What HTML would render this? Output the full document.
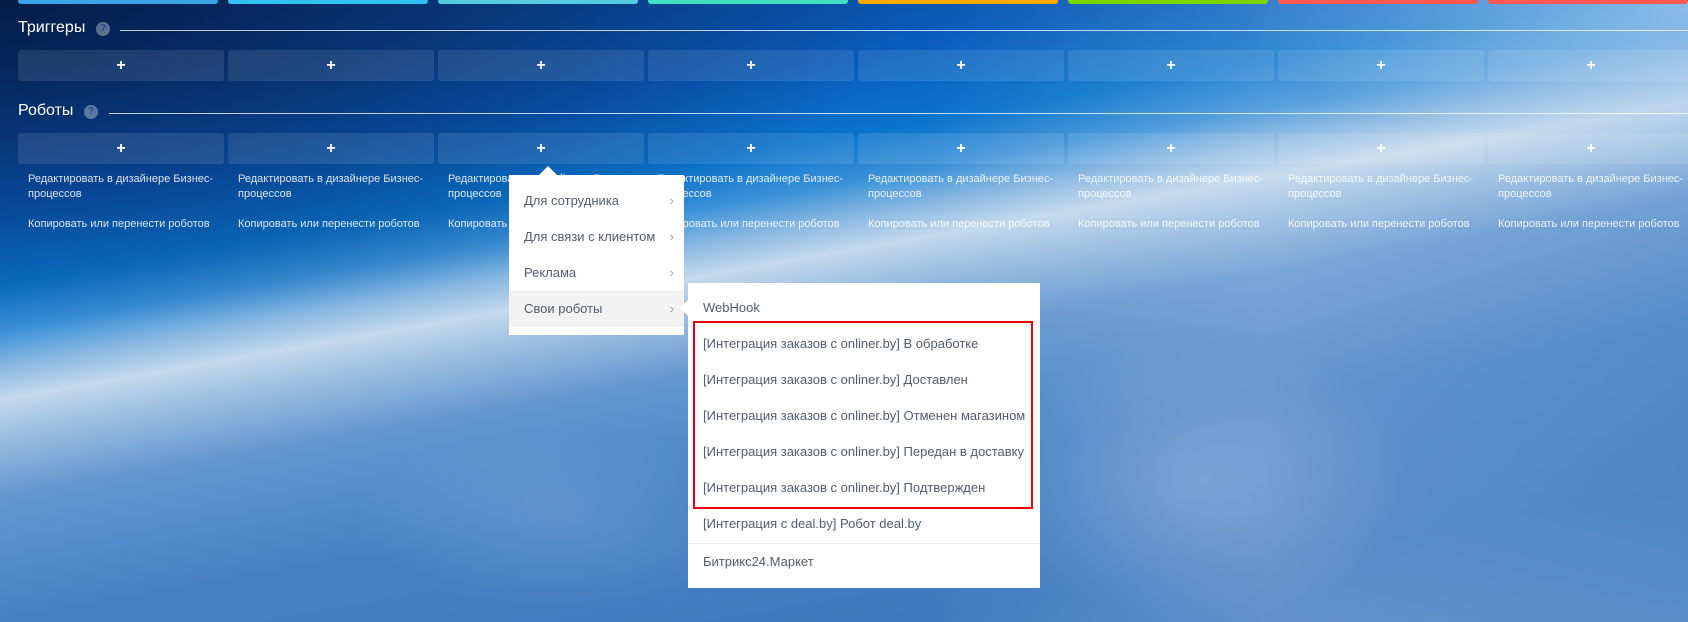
<!DOCTYPE html>
<html><head><meta charset="utf-8"><style>
*{margin:0;padding:0;box-sizing:border-box}
html,body{width:1688px;height:622px;overflow:hidden}
body{position:relative;font-family:"Liberation Sans",Arial,sans-serif;background:#3d78be}
.bg{position:absolute;left:0;top:0;width:1688px;height:622px;
background:
radial-gradient(ellipse 900px 330px at 0 0,rgba(4,18,55,.75),rgba(4,18,55,0) 100%),
radial-gradient(ellipse 450px 170px at 1688px 0,rgba(170,205,238,.75),rgba(170,205,238,0) 100%),
linear-gradient(90deg,rgba(255,255,255,0) 0%,rgba(255,255,255,0) 55%,rgba(225,235,248,.18) 75%,rgba(225,235,248,.1) 100%),
radial-gradient(ellipse 260px 180px at 1200px 480px,rgba(235,242,250,.22),rgba(255,255,255,0) 80%),
radial-gradient(ellipse 260px 110px at 560px 520px,rgba(235,242,250,.15),rgba(255,255,255,0) 80%),
linear-gradient(170deg,#0a3a80 0%,#0a5cbc 22%,#0a74cc 31%,#3a90d8 36%,#8ab8e2 40%,#c4d9ec 43.5%,#a0c2e2 47%,#6497d0 54%,#4580c4 68%,#3f7ac0 85%,#4a82c2 100%);}
.bar{position:absolute;top:0;height:4px;width:200px;border-radius:0 0 3px 3px}
.h{position:absolute;left:18px;color:#fff;font-size:16px}
.q{position:absolute;width:14px;height:14px;border-radius:50%;background:rgba(255,255,255,.35);color:#1d4f8a;font-size:10px;font-weight:bold;text-align:center;line-height:14px}
.line{position:absolute;height:1px;background:rgba(255,255,255,.75);right:0}
.box{position:absolute;width:206px;height:31px;border-radius:3px;background:rgba(255,255,255,.1);color:#fff;text-align:center;font-size:16px;font-weight:bold;line-height:31px}
.t{position:absolute;width:190px;color:rgba(255,255,255,.85);font-size:11px;line-height:15px}
.m{position:absolute;background:#fff}
.mi{position:absolute;left:0;right:0;height:36px;line-height:36px;padding-left:15px;font-size:13px;color:#535c69}
.chev{position:absolute;right:10px;top:0;color:#a0a6ad;font-size:13px}
</style></head><body>
<div class="bg"></div>
<div class="bar" style="left:18px;background:#3ba5e8"></div>
<div class="bar" style="left:228px;background:#2fc2f2"></div>
<div class="bar" style="left:438px;background:#55cbe0"></div>
<div class="bar" style="left:648px;background:#3fdfc0"></div>
<div class="bar" style="left:858px;background:#ffa800"></div>
<div class="bar" style="left:1068px;background:#7bd500"></div>
<div class="bar" style="left:1278px;background:#ff5752"></div>
<div class="bar" style="left:1488px;background:#ff5752"></div>

<div class="h" style="top:19px">Триггеры</div>
<div class="q" style="left:96px;top:22px">?</div>
<div class="line" style="left:120px;top:30px"></div>
<div class="h" style="top:102px">Роботы</div>
<div class="q" style="left:84px;top:105px">?</div>
<div class="line" style="left:109px;top:113px"></div>

<div class="box" style="left:18px;top:50px">+</div><div class="box" style="left:228px;top:50px">+</div><div class="box" style="left:438px;top:50px">+</div><div class="box" style="left:648px;top:50px">+</div><div class="box" style="left:858px;top:50px">+</div><div class="box" style="left:1068px;top:50px">+</div><div class="box" style="left:1278px;top:50px">+</div><div class="box" style="left:1488px;top:50px">+</div>
<div class="box" style="left:18px;top:133px">+</div><div class="box" style="left:228px;top:133px">+</div><div class="box" style="left:438px;top:133px">+</div><div class="box" style="left:648px;top:133px">+</div><div class="box" style="left:858px;top:133px">+</div><div class="box" style="left:1068px;top:133px">+</div><div class="box" style="left:1278px;top:133px">+</div><div class="box" style="left:1488px;top:133px">+</div>

<div class="t" style="left:28px;top:172px">Редактировать в дизайнере Бизнес-процессов<br><br>Копировать или перенести роботов</div>
<div class="t" style="left:238px;top:172px">Редактировать в дизайнере Бизнес-процессов<br><br>Копировать или перенести роботов</div>
<div class="t" style="left:448px;top:172px">Редактировать в дизайнере Бизнес-процессов<br><br>Копировать или перенести роботов</div>
<div class="t" style="left:658px;top:172px">Редактировать в дизайнере Бизнес-процессов<br><br>Копировать или перенести роботов</div>
<div class="t" style="left:868px;top:172px">Редактировать в дизайнере Бизнес-процессов<br><br>Копировать или перенести роботов</div>
<div class="t" style="left:1078px;top:172px">Редактировать в дизайнере Бизнес-процессов<br><br>Копировать или перенести роботов</div>
<div class="t" style="left:1288px;top:172px">Редактировать в дизайнере Бизнес-процессов<br><br>Копировать или перенести роботов</div>
<div class="t" style="left:1498px;top:172px">Редактировать в дизайнере Бизнес-процессов<br><br>Копировать или перенести роботов</div>

<div class="m" style="left:509px;top:175px;width:175px;height:160px">
<div style="position:absolute;left:30px;top:-9px;width:0;height:0;border-left:9px solid transparent;border-right:9px solid transparent;border-bottom:9px solid #fff"></div>
<div class="mi" style="top:8px">Для сотрудника<span class="chev">›</span></div>
<div class="mi" style="top:44px">Для связи с клиентом<span class="chev">›</span></div>
<div class="mi" style="top:80px">Реклама<span class="chev">›</span></div>
<div class="mi" style="top:116px;background:#f2f2f2">Свои роботы<span class="chev">›</span></div>
</div>

<div class="m" style="left:688px;top:283px;width:352px;height:305px">
<div style="position:absolute;left:-8px;top:17px;width:0;height:0;border-top:8px solid transparent;border-bottom:8px solid transparent;border-right:8px solid #fff"></div>
<div class="mi" style="top:7px">WebHook</div>
<div class="mi" style="top:43px">[Интеграция заказов с onliner.by] В обработке</div>
<div class="mi" style="top:79px">[Интеграция заказов с onliner.by] Доставлен</div>
<div class="mi" style="top:115px">[Интеграция заказов с onliner.by] Отменен магазином</div>
<div class="mi" style="top:151px">[Интеграция заказов с onliner.by] Передан в доставку</div>
<div class="mi" style="top:187px">[Интеграция заказов с onliner.by] Подтвержден</div>
<div class="mi" style="top:223px">[Интеграция с deal.by] Робот deal.by</div>
<div style="position:absolute;left:0;right:0;top:260px;height:1px;background:#ececec"></div>
<div class="mi" style="top:261px">Битрикс24.Маркет</div>
<div style="position:absolute;left:5px;top:38px;width:340px;height:188px;border:2px solid #e8000b"></div>
</div>
</body></html>
